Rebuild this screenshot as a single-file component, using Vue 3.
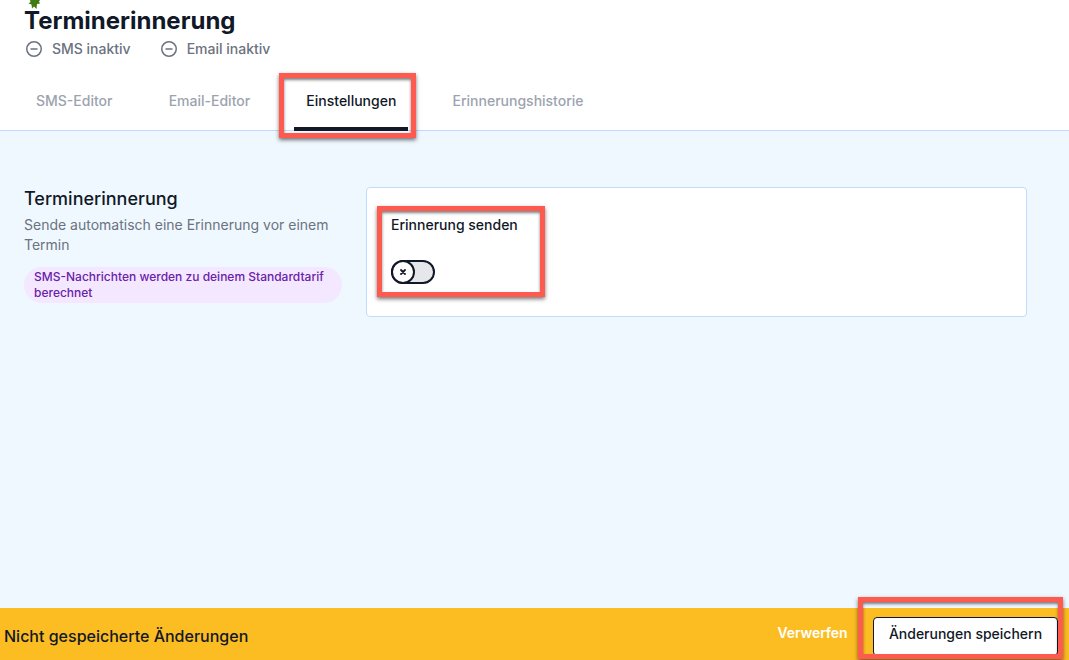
<script setup>
const tabs = [
  { label: 'SMS-Editor', active: false },
  { label: 'Email-Editor', active: false },
  { label: 'Einstellungen', active: true },
  { label: 'Erinnerungshistorie', active: false }
]
const statuses = ['SMS inaktiv', 'Email inaktiv']
</script>

<template>
  <div class="page">
    <header class="header">
      <svg class="leaf" width="14" height="10" viewBox="0 0 14 10">
        <path d="M3 0h10l-1 1.500 1 2-3 .5-.5 5L7 6.500 5 8.500 4.500 4.500 1.500 3.500 3.500 2z" fill="#3f7a12" />
      </svg>
      <h1 class="title">Terminerinnerung</h1>
      <div class="statuses">
        <span v-for="s in statuses" :key="s" class="status">
          <svg width="16" height="16" viewBox="0 0 16 16" fill="none" stroke="#6b7280" stroke-width="1.5" stroke-linecap="round">
            <circle cx="8" cy="8" r="7.25" />
            <path d="M5 8h6" />
          </svg>
          {{ s }}
        </span>
      </div>
      <nav class="tabs">
        <div v-for="t in tabs" :key="t.label" class="tab" :class="{ active: t.active }">{{ t.label }}</div>
      </nav>
    </header>

    <main class="main">
      <section class="intro">
        <h2 class="intro-title">Terminerinnerung</h2>
        <p class="intro-text">Sende automatisch eine Erinnerung vor einem Termin</p>
        <p class="pill">SMS-Nachrichten werden zu deinem Standardtarif berechnet</p>
      </section>
      <section class="card">
        <div class="label">Erinnerung senden</div>
        <div class="toggle">
          <span class="knob">
            <svg width="8" height="8" viewBox="0 0 8 8" stroke="#111827" stroke-width="1.8" stroke-linecap="round">
              <path d="M2 2l4 4M6 2l-4 4" />
            </svg>
          </span>
        </div>
      </section>
    </main>

    <footer class="footer">
      <span class="footer-text">Nicht gespeicherte Änderungen</span>
      <div class="actions">
        <span class="discard">Verwerfen</span>
        <button class="save" type="button">Änderungen speichern</button>
      </div>
    </footer>

    <div class="mark mark-tab"></div>
    <div class="mark mark-toggle"></div>
    <div class="mark mark-save"></div>
  </div>
</template>

<style>
html, body { margin: 0; overflow: hidden; }
</style>

<style scoped>
.page {
  position: relative;
  display: flex;
  flex-direction: column;
  width: 1069px;
  height: 660px;
  overflow: hidden;
  font-family: Inter, "Liberation Sans", sans-serif;
  color: #111827;
  background: #f0f8ff;
}
.header {
  position: relative;
  flex: none;
  box-sizing: border-box;
  height: 131px;
  padding: 5px 0 0 24px;
  background: #fff;
  border-bottom: 1px solid #bfdbfe;
}
.leaf { position: absolute; left: 27px; top: 0; }
.title {
  margin: 0;
  font-size: 24px;
  line-height: 32px;
  font-weight: 700;
}
.statuses {
  display: flex;
  gap: 30px;
  margin: 2px 0 0 2px;
}
.status {
  display: flex;
  align-items: center;
  gap: 10px;
  font-size: 14px;
  line-height: 20px;
  font-weight: 500;
  color: #6b7280;
}
.tabs {
  display: flex;
  gap: 32.2px;
  margin-top: 18px;
}
.tab {
  box-sizing: border-box;
  height: 54px;
  padding: 14px 12px 0;
  font-size: 14px;
  line-height: 20px;
  font-weight: 500;
  color: #9ca3af;
}
.tab.active {
  color: #111827;
  border-bottom: 4px solid #111827;
}
.main {
  flex: 1;
  display: flex;
  align-items: flex-start;
  gap: 24px;
  padding: 56px 42px 0 24px;
}
.intro { flex: none; width: 318px; }
.intro-title {
  margin: 0;
  font-size: 18px;
  line-height: 24px;
  font-weight: 500;
}
.intro-text {
  margin: 4px 0 0;
  font-size: 14px;
  line-height: 20px;
  color: #6b7280;
}
.pill {
  box-sizing: border-box;
  margin: 12px 0 0;
  padding: 2px 10px;
  border-radius: 18px;
  background: #f3e8ff;
  color: #6b21a8;
  font-size: 12px;
  line-height: 16px;
  font-weight: 500;
}
.card {
  flex: 1;
  box-sizing: border-box;
  height: 130px;
  padding: 27px 24px 0;
  background: #fff;
  border: 1px solid #bfdbfe;
  border-radius: 4px;
}
.label {
  font-size: 14px;
  line-height: 20px;
  font-weight: 500;
}
.toggle {
  box-sizing: border-box;
  width: 44px;
  height: 24px;
  margin-top: 25px;
  background: #e5e7eb;
  border: 2px solid #111827;
  border-radius: 12px;
}
.knob {
  box-sizing: border-box;
  display: flex;
  align-items: center;
  justify-content: center;
  width: 24px;
  height: 24px;
  margin: -2px 0 0 -2px;
  background: #fff;
  border: 2px solid #111827;
  border-radius: 50%;
}
.footer {
  flex: none;
  display: flex;
  align-items: center;
  justify-content: space-between;
  box-sizing: border-box;
  height: 52px;
  padding: 4px 11px 0 4px;
  background: #fcbd22;
}
.footer-text {
  font-size: 16px;
  line-height: 24px;
  font-weight: 500;
}
.actions {
  display: flex;
  align-items: center;
  gap: 25.5px;
}
.discard {
  font-size: 14px;
  font-weight: 600;
  color: #fff;
  margin-top: -8px;
  letter-spacing: -0.1px;
}
.save {
  box-sizing: border-box;
  width: 185px;
  height: 39px;
  padding: 0 0 4px;
  background: #fff;
  border: 1px solid #111827;
  border-radius: 4px;
  font: 500 14px/20px Inter, "Liberation Sans", sans-serif;
  color: #111827;
}
.mark {
  position: absolute;
  box-sizing: border-box;
  border: 5px solid #ff5a4f;
  box-shadow: 0 2px 4px rgba(0, 0, 0, 0.55), inset 0 2px 3px rgba(0, 0, 0, 0.5);
  pointer-events: none;
}
.mark-tab { left: 279px; top: 73px; width: 137px; height: 65px; }
.mark-toggle { left: 377px; top: 206px; width: 168px; height: 91px; }
.mark-save { left: 858px; top: 597px; width: 205px; height: 62px; }
</style>
